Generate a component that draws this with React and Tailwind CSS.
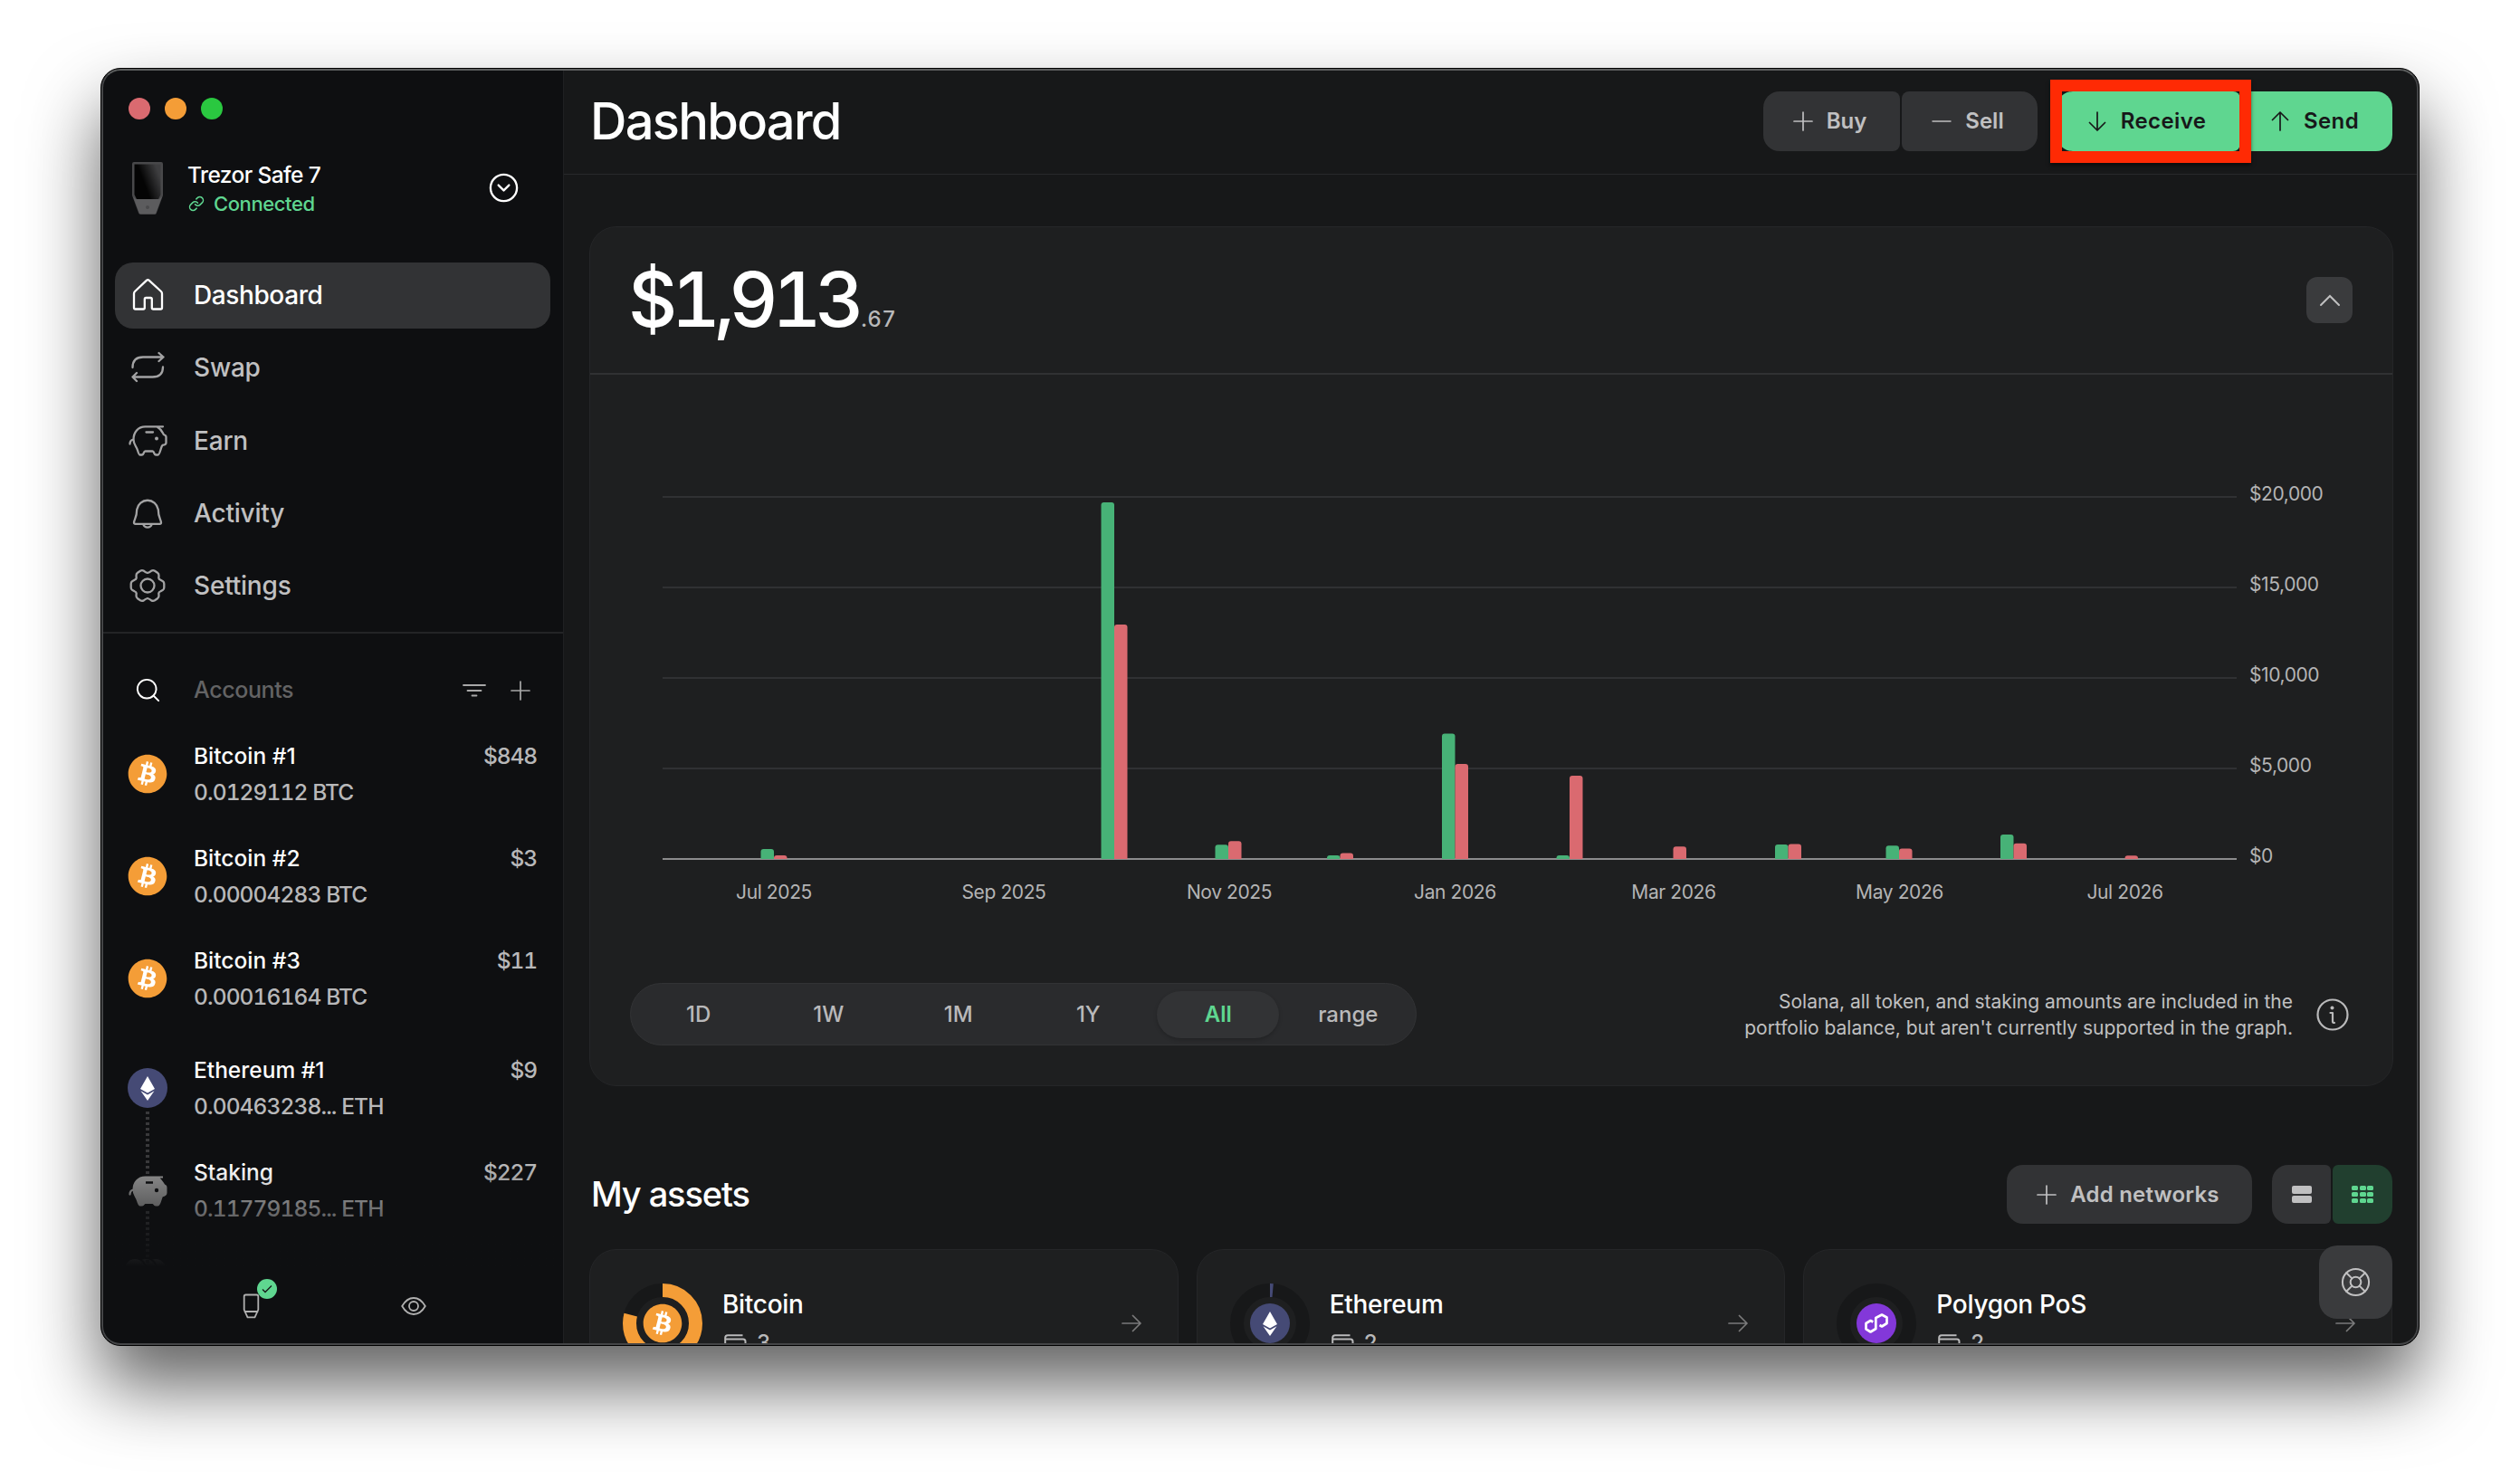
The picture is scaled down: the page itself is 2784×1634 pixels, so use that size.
import React, { useState } from 'react';
import { CircleChevronDown, LifeBuoy, Link, Search } from 'lucide-react';
import { FaBitcoin } from 'react-icons/fa';

const navItems = ['Dashboard', 'Swap', 'Earn', 'Activity', 'Settings'];

const accounts = [
    { name: 'Bitcoin #1', amount: '0.0129112 BTC', fiat: '$848', coin: 'btc' },
    { name: 'Bitcoin #2', amount: '0.00004283 BTC', fiat: '$3', coin: 'btc' },
    { name: 'Bitcoin #3', amount: '0.00016164 BTC', fiat: '$11', coin: 'btc' },
    { name: 'Ethereum #1', amount: '0.00463238... ETH', fiat: '$9', coin: 'eth' },
    { name: 'Staking', amount: '0.11779185... ETH', fiat: '$227', coin: 'staking' },
];

// x is the centre of the pair of bars, received / sent are in dollars
const bars = [
    { x: 203, received: 550, sent: 200 },
    { x: 579, received: 19700, sent: 12950 },
    { x: 705, received: 790, sent: 990 },
    { x: 828.5, received: 200, sent: 330 },
    { x: 955.5, received: 6920, sent: 5250 },
    { x: 1082, received: 200, sent: 4600 },
    { x: 1196.5, received: 0, sent: 690 },
    { x: 1323.5, received: 800, sent: 830 },
    { x: 1446, received: 740, sent: 570 },
    { x: 1572.5, received: 1350, sent: 860 },
    { x: 1695.5, received: 0, sent: 190 },
];

const months = [
    { x: 203, label: 'Jul 2025' },
    { x: 457, label: 'Sep 2025' },
    { x: 706, label: 'Nov 2025' },
    { x: 955.5, label: 'Jan 2026' },
    { x: 1197, label: 'Mar 2026' },
    { x: 1446.5, label: 'May 2026' },
    { x: 1695.5, label: 'Jul 2026' },
];

const gridLines = [
    { value: 20000, label: '$20,000' },
    { value: 15000, label: '$15,000' },
    { value: 10000, label: '$10,000' },
    { value: 5000, label: '$5,000' },
    { value: 0, label: '$0' },
];

const ranges = ['1D', '1W', '1M', '1Y', 'All', 'range'];

const NavIcon = ({ name }) => {
    const props = {
        fill: 'none',
        stroke: 'currentColor',
        strokeWidth: 2.3,
        strokeLinecap: 'round',
        strokeLinejoin: 'round',
    };

    if (name === 'Dashboard') {
        return (
            <svg width="35" height="37" viewBox="0 0 35 37" {...props}>
                <path d="M2 17.5Q2 16 3 15L15.8 2.8Q17.3 1.500 18.800 2.800L32 15Q33 16 33 17.500V33Q33 34.500 31.500 34.500H23.300Q21.800 34.500 21.800 33V23.500q0-1.500-1.500-1.500H15.300q-1.500 0-1.500 1.500V33Q13.800 34.500 12.300 34.500H3.500Q2 34.500 2 33Z" />
            </svg>
        );
    }
    if (name === 'Swap') {
        return (
            <svg width="38" height="36" viewBox="0 0 38 36" {...props}>
                <path d="M2.500 18C2.500 10 7 6.500 14 6.500H36.500M31.500 2 36.500 6.500 31.500 11M36 17.500C36 25 31.500 28.500 24.500 28.500H2.500M7 24 2.500 28.500 7 33" />
            </svg>
        );
    }
    if (name === 'Earn') {
        return (
            <svg width="43" height="37" viewBox="0 0 43 37" {...props}>
                <path d="M1.500 22.500C1.500 19.500 3 18 5.300 17.500M38 3.300H18.500C10.500 3.300 5.500 9.500 5.500 17.500C5.500 23 8.500 24.500 10 29.500C11 33 11.500 34.500 12.500 34.500H15C17 34.500 16.500 30.500 18.500 30.500H26.500C28.500 30.500 28 34.500 30 34.500H32.500C34.500 34.500 35 29 37 24.500Q37.500 23.500 39.500 23.300Q41.500 23 41.500 21V15Q41.500 13 39.500 12.500Q38.500 12 38 10.500C36.500 7.500 35 5.500 31.500 3.500M19.500 9.500H27" />
                <circle cx="31" cy="16.500" r="2" fill="currentColor" stroke="none" />
            </svg>
        );
    }
    if (name === 'Activity') {
        return (
            <svg width="34" height="38" viewBox="0 0 34 38" {...props}>
                <path d="M5.200 15A12 12.500 0 0 1 28.800 15C28.800 24 32 26 32 29.500Q32 30.800 30.500 30.800H3.500Q2 30.800 2 29.500C2 26 5.200 24 5.200 15ZM12.200 31A5 5 0 0 0 21.800 31" />
            </svg>
        );
    }
    return (
        <svg width="40" height="40" viewBox="-20 -20 40 40" {...props}>
            <path d="M0-14Q2-14.500 4-16.200Q6-17.500 8-16.300L11-14.300Q12.600-13.200 12.500-11L12.300-8.500Q12.500-7 14.500-6.200L17-4.800Q18.300-4 18.300-2V2Q18.300 4 17 4.800L14.500 6.200Q12.500 7 12.300 8.500L12.500 11Q12.600 13.200 11 14.300L8 16.300Q6 17.500 4 16.200Q2 14.500 0 14Q-2 14.500-4 16.200Q-6 17.500-8 16.300L-11 14.300Q-12.600 13.200-12.500 11L-12.300 8.500Q-12.500 7-14.500 6.200L-17 4.800Q-18.300 4-18.300 2V-2Q-18.300-4-17-4.800L-14.500-6.200Q-12.500-7-12.300-8.500L-12.500-11Q-12.600-13.200-11-14.300L-8-16.300Q-6-17.500-4-16.200Q-2-14.500 0-14Z" />
            <circle r="7.500" />
        </svg>
    );
};

const Plus = () => (
    <svg width="22" height="22" viewBox="0 0 22 22" stroke="currentColor" strokeWidth="1.700" strokeLinecap="round">
        <path d="M1 11H21M11 1V21" />
    </svg>
);

const Arrow = ({ className }) => (
    <svg
        width="22"
        height="22"
        viewBox="0 0 22 22"
        fill="none"
        stroke="currentColor"
        strokeWidth="1.700"
        strokeLinecap="round"
        strokeLinejoin="round"
        className={className}
    >
        <path d="M1 11H21M12.500 2.500 21 11 12.500 19.500" />
    </svg>
);

const Piggy = () => (
    <svg width="43" height="37" viewBox="0 0 43 37" className="text-[#929292]">
        <path
            d="M38 3.500H18.500C10.500 3.500 5.500 9.500 5.500 17.500C5.500 23 8.500 24.500 10 29.500C11 33 11.500 34.500 12.500 34.500H15C17 34.500 16.500 32 18.500 32H26.500C28.500 32 28 34.500 30 34.500H32.500C34.500 34.500 35 29 37 24.500Q41.500 23.500 41.500 21V15Q41.500 13 39.500 12.500C36.500 7.500 35 5.500 32 3.500"
            fill="currentColor"
            stroke="currentColor"
            strokeWidth="2"
            strokeLinejoin="round"
        />
        <path d="M1.500 22.500C1.500 19.500 3 18 5.300 17.500" fill="none" stroke="currentColor" strokeWidth="2.300" strokeLinecap="round" />
        <path d="M19 9.500H27" stroke="#0e0f11" strokeWidth="2.500" />
        <circle cx="31" cy="18" r="2.200" fill="#0e0f11" />
    </svg>
);

const CoinIcon = ({ coin }) => {
    if (coin === 'btc') {
        return (
            <div className="flex size-11 items-center justify-center rounded-full bg-[radial-gradient(circle,#ffffff_60%,transparent_61%)]">
                <FaBitcoin className="size-11 text-[#f49d37]" />
            </div>
        );
    }
    if (coin === 'eth') {
        return (
            <svg width="44" height="44" viewBox="0 0 44 44">
                <circle cx="22" cy="22" r="22" fill="#454a75" />
                <path d="M22 9 30 23 22 27.500 14 23ZM22 29.500 29.500 25.200 22 36 14.500 25.200Z" fill="#fff" />
            </svg>
        );
    }
    if (coin === 'matic') {
        return (
            <svg width="44" height="44" viewBox="0 0 44 44">
                <circle cx="22" cy="22" r="22" fill="#8338d9" />
                <path
                    d="M18.300 20.500 15.500 19 10.500 22V28.300L15.500 31.500 21.300 28V16L28 12.500 33.500 15.500V22L28 25.500 25.500 24"
                    fill="none"
                    stroke="#fff"
                    strokeWidth="2.700"
                    strokeLinejoin="round"
                    strokeLinecap="butt"
                />
            </svg>
        );
    }
    return <Piggy />;
};

const Donut = ({ share, color, coin }) => {
    const length = 2 * Math.PI * 36.5;
    return (
        <div className="grid size-[88px] shrink-0 place-items-center">
            <svg width="88" height="88" viewBox="0 0 88 88" className="col-start-1 row-start-1 -rotate-90">
                <circle cx="44" cy="44" r="36.500" fill="none" stroke="#171819" strokeWidth="15" />
                <circle
                    cx="44"
                    cy="44"
                    r="36.500"
                    fill="none"
                    stroke={color}
                    strokeWidth="15"
                    strokeDasharray={`${length * share} ${length}`}
                />
            </svg>
            <div className="col-start-1 row-start-1">
                <CoinIcon coin={coin} />
            </div>
        </div>
    );
};

const AssetCard = ({ name, count, share, color, coin }) => (
    <div className="flex h-[300px] flex-1 items-start rounded-t-[30px] border border-[#252628] bg-[#1e1f20] pl-[36px] pr-[40px] pt-[37px]">
        <Donut share={share} color={color} coin={coin} />
        <div className="ml-[22px] flex-1">
            <div className="mt-[5px] text-[28px] font-medium leading-[36px] tracking-[-0.3px] text-white">{name}</div>
            <div className="mt-[13px] flex items-start gap-[11px] pl-[2px] text-[#b9b9ba]">
                <svg width="25" height="24" viewBox="0 0 25 24" fill="none" stroke="currentColor" strokeWidth="2" className="mt-[2px]">
                    <path d="M20.500 1.200H4Q1.200 1.200 1.200 4V20Q1.200 22.500 4 22.500H21Q23.500 22.500 23.500 20V8Q23.500 5.500 21 5.500H1.500" />
                </svg>
                <span className="-mt-[3px] text-[24px] font-medium leading-[30px]">{count}</span>
            </div>
        </div>
        <Arrow className="mt-[33px] text-[#7a7a7b]" />
    </div>
);

const Sidebar = () => {
    const [active, setActive] = useState('Dashboard');

    return (
        <aside className="relative flex w-[511px] shrink-0 flex-col border-r border-[#1f2022] bg-[#0e0f11]">
            <div className="flex gap-4 pl-[30px] pt-8">
                <span className="size-6 rounded-full bg-[#da6a70]" />
                <span className="size-6 rounded-full bg-[#f49d37]" />
                <span className="size-6 rounded-full bg-[#2ac840]" />
            </div>

            {/* Device */}
            <div className="mt-[47px] flex h-[58px] items-center pl-[34px] pr-[48px]">
                <svg width="34" height="58" viewBox="0 0 34 58">
                    <path d="M2 0H32Q34 0 34 2V37L27 56Q26.500 58 25 58H9.500Q7.500 58 7 56L0 37V2Q0 0 2 0Z" fill="#48484a" />
                    <path d="M1 38 4 41H30L33 38 26 57H8Z" fill="#5c5c5e" />
                    <path d="M2.500 2.500H31.500V36L29 41H5L2.500 36Z" fill="url(#screen)" />
                    <circle cx="17" cy="50" r="2" fill="#4a4a4c" />
                    <defs>
                        <linearGradient id="screen" x1="0.100" y1="0.600" x2="0.900" y2="0.200">
                            <stop offset="0.300" stopColor="#040404" />
                            <stop offset="1" stopColor="#3e3e40" />
                        </linearGradient>
                    </defs>
                </svg>
                <div className="ml-[27px] flex-1 pt-[2px]">
                    <div className="text-[24.500px] font-medium leading-[32px] tracking-[-0.6px] text-white">Trezor Safe 7</div>
                    <div className="flex items-center gap-[10px] pl-[1px] text-[22px] font-medium leading-[32px] tracking-[-0.4px] text-[#5fd690]">
                        <Link size={18} strokeWidth={2} />
                        Connected
                    </div>
                </div>
                <CircleChevronDown size={35} strokeWidth={1.6} className="-mt-[2px] text-white" />
            </div>

            {/* Navigation */}
            <nav className="mt-[53px] flex flex-col gap-[7.300px] pl-[15px] pr-[14px]">
                {navItems.map((item) => (
                    <button
                        key={item}
                        onClick={() => setActive(item)}
                        className={
                            active === item
                                ? 'flex h-[73px] items-center rounded-[20px] bg-[#323335] pb-[2px] text-white'
                                : 'flex h-[73px] items-center rounded-[20px] pb-[1px] text-[#a3a3a4]'
                        }
                    >
                        <span className="ml-[11px] flex w-[50px] justify-center">
                            <NavIcon name={item} />
                        </span>
                        <span
                            className={
                                active === item
                                    ? 'ml-[26px] text-[28px] font-medium tracking-[-0.400px] text-white'
                                    : 'ml-[26px] text-[28px] font-medium tracking-[-0.200px] text-[#c0c0c1]'
                            }
                        >
                            {item}
                        </span>
                    </button>
                ))}
            </nav>

            {/* Accounts */}
            <div className="mt-[14px] flex h-[101px] shrink-0 items-center border-t-2 border-[#232426] pl-[36px] pr-[36px] pt-[26px]">
                <Search size={31} strokeWidth={1.5} className="text-white" />
                <span className="ml-[35px] flex-1 text-[25px] font-medium tracking-[-0.400px] text-[#636364]">Accounts</span>
                <svg width="28" height="16" viewBox="0 0 28 16" stroke="#a8a8a8" strokeWidth="1.800" strokeLinecap="round" className="mr-[26px]">
                    <path d="M2 2H26M6.500 8H21.500M11.500 13.500H16.500" />
                </svg>
                <span className="text-[#a8a8a8]">
                    <Plus />
                </span>
            </div>
            <div className="flex flex-col">
                {accounts.map((account) => (
                    <div
                        key={account.name}
                        className={
                            account.coin === 'eth'
                                ? 'mt-[8px] flex h-[113px] shrink-0 items-center pb-[1px] pl-[28px] pr-[29px]'
                                : 'flex h-[113px] shrink-0 items-center pb-[1px] pl-[28px] pr-[29px]'
                        }
                    >
                        <div className="relative flex w-[46px] shrink-0 justify-center">
                            <CoinIcon coin={account.coin} />
                            {account.coin !== 'btc' && (
                                <div className="absolute left-[21px] top-full mt-[4px] h-[70px] w-[4px] bg-[repeating-linear-gradient(to_bottom,#39393b_0,#39393b_3px,transparent_3px,transparent_6px)]" />
                            )}
                        </div>
                        <div className="ml-[28px] flex-1 text-[24.500px] font-medium leading-[40px]">
                            <div className="flex justify-between text-white">
                                {account.name}
                                <span className="tracking-[-1.100px] text-[#b8b8b9] tabular-nums">{account.fiat}</span>
                            </div>
                            <div className="tracking-[-0.900px] text-[#b8b8b9] tabular-nums">{account.amount}</div>
                        </div>
                    </div>
                ))}
                {/* Token group, nearly hidden by the fade */}
                <svg width="50" height="26" viewBox="0 0 50 26" fill="#8a8a8a" stroke="#0e0f11" strokeWidth="2" className="ml-[24px] mt-[17px] shrink-0">
                    <circle cx="36" cy="13" r="12" />
                    <circle cx="25" cy="13" r="12" />
                    <circle cx="13" cy="13" r="12" />
                </svg>
            </div>

            {/* Bottom bar over the fading list */}
            <div className="absolute inset-x-0 bottom-0">
                <div className="h-[110px] bg-linear-to-b from-[#0e0f11]/0 to-[#0e0f11]" />
                <div className="flex h-[87px] bg-[#0e0f11]">
                    <div className="relative ml-[156px] mt-[30px] text-[#b0b0b0]">
                        <svg width="19" height="28" viewBox="0 0 19 28" fill="none" stroke="currentColor" strokeWidth="1.800" strokeLinejoin="round">
                            <path d="M3.500 1.500H15.500Q17.300 1.500 17.300 3.300V18L13.500 26.300H5.500L1.700 18V3.300Q1.700 1.500 3.500 1.500ZM1.700 20H17.300" />
                        </svg>
                        <span className="absolute -top-[16px] left-[16px] flex size-[22px] items-center justify-center rounded-full bg-[#5fd690]">
                            <svg width="12" height="10" viewBox="0 0 12 10" fill="none" stroke="#171819" strokeWidth="1.300">
                                <path d="M1 5.500 4 8.500 11 1.500" />
                            </svg>
                        </span>
                    </div>
                    <svg width="28" height="20" viewBox="0 0 28 20" fill="none" stroke="#b0b0b0" strokeWidth="1.800" className="ml-[156px] mt-[34px]">
                        <path d="M1.200 10C5 3.500 9 1 14 1S23 3.500 26.800 10C23 16.500 19 19 14 19S5 16.500 1.200 10Z" />
                        <circle cx="14" cy="10" r="5" />
                    </svg>
                </div>
            </div>
        </aside>
    );
};

const Chart = () => (
    <svg width="1991" height="646" viewBox="0 0 1991 646" className="font-[Inter,sans-serif] tracking-[-0.400px]">
        {gridLines.map((line) => (
            <g key={line.value}>
                <path d={`M80 ${535 - line.value / 50}H1819`} stroke={line.value === 0 ? '#8c8c8d' : '#303133'} strokeWidth="2" />
                <text x="1833" y={539 - line.value / 50} fontSize="21" fill="#b4b4b5">
                    {line.label}
                </text>
            </g>
        ))}
        {bars.map((bar) => (
            <g key={bar.x}>
                {bar.received > 0 && (
                    <path
                        d={`M${bar.x - 14.5} 535V${538 - bar.received / 50}q0-3 3-3h8.500q3 0 3 3V535Z`}
                        fill="#47b277"
                    />
                )}
                <path d={`M${bar.x} 535V${538 - bar.sent / 50}q0-3 3-3h8.500q3 0 3 3V535Z`} fill="#da6a70" />
            </g>
        ))}
        {months.map((month) => (
            <text key={month.label} x={month.x} y="579" fontSize="21" fill="#b4b4b5" textAnchor="middle">
                {month.label}
            </text>
        ))}
    </svg>
);

const App = () => {
    const [range, setRange] = useState('All');

    return (
        <div className="h-[1634px] w-[2784px] overflow-hidden bg-white pl-[111px] pt-[75px] font-[Inter,sans-serif]">
            <div className="relative flex h-[1412px] w-[2562px] overflow-hidden rounded-[22px] border border-black bg-[#171819] shadow-[0_44px_80px_rgba(0,0,0,0.62)]">
                <Sidebar />

                <main className="flex min-w-0 flex-1 flex-col">
                    <header className="flex h-[117px] shrink-0 items-center border-b border-[#28292b] pl-[29px] pr-[29px]">
                        <h1 className="flex-1 text-[56px] font-medium leading-none tracking-[-1.7px] text-white">Dashboard</h1>
                        <div className="flex gap-[2px] text-[24px] font-semibold">
                            <button className="flex h-[66px] w-[151px] items-center justify-center gap-[15px] rounded-l-[18px] rounded-r-[8px] bg-[#323335] pr-[4px] text-[#c0c0c1]">
                                <Plus />
                                Buy
                            </button>
                            <button className="flex h-[66px] w-[150px] items-center justify-center gap-[15px] rounded-l-[8px] rounded-r-[18px] bg-[#323335] pr-[4px] text-[#c0c0c1]">
                                <svg width="22" height="22" viewBox="0 0 22 22" stroke="currentColor" strokeWidth="1.700">
                                    <path d="M0.500 11H21.500" />
                                </svg>
                                Sell
                            </button>
                            <button className="relative ml-[19px] flex h-[66px] w-[203px] items-center justify-center gap-[15px] rounded-l-[18px] rounded-r-[8px] bg-[#5fd690] pr-[4px] tracking-[0.400px] text-[#171819]">
                                <Arrow className="rotate-90" />
                                Receive
                                <span className="absolute -left-[7px] -top-[13px] z-10 h-[92px] w-[222px] border-[13px] border-[#ff2a04] shadow-[0_3px_4px_rgba(0,0,0,0.5)]" />
                            </button>
                            <button className="flex h-[66px] w-[166px] items-center justify-center gap-[15px] rounded-l-[8px] rounded-r-[18px] bg-[#5fd690] pr-[6px] tracking-[0.400px] text-[#171819]">
                                <Arrow className="-rotate-90" />
                                Send
                            </button>
                        </div>
                    </header>

                    {/* Portfolio graph */}
                    <section className="ml-[28px] mr-[28px] mt-[57px] flex h-[950px] shrink-0 flex-col rounded-[30px] border border-[#252628] bg-[#1e1f20]">
                        <div className="flex h-[163px] shrink-0 items-center justify-between border-b-2 border-[#303133] pl-[42px] pr-[44px]">
                            <div className="flex items-baseline pb-[2px] tabular-nums">
                                <span className="text-[84px] font-[550] leading-none tracking-[-6.700px] text-white">$1,913</span>
                                <span className="ml-[3px] text-[24px] font-medium tracking-[0.400px] text-[#b9b9ba]">.67</span>
                            </div>
                            <button className="flex size-[51px] items-center justify-center rounded-[12px] bg-[#3a3b3d]">
                                <svg width="24" height="14" viewBox="0 0 24 14" fill="none" stroke="#c0c0c1" strokeWidth="2" strokeLinecap="round">
                                    <path d="M2 12 12 2 22 12" />
                                </svg>
                            </button>
                        </div>
                        <Chart />
                        <div className="mt-[26px] flex items-center pl-[44px] pr-[48px]">
                            <div className="flex h-[69px] w-[869px] items-center rounded-full border border-[#323335] bg-[#2a2b2d] px-[3px]">
                                {ranges.map((item) => (
                                    <div key={item} className="flex flex-1 justify-center">
                                        <button
                                            onClick={() => setRange(item)}
                                            className={
                                                range === item
                                                    ? 'h-[52px] w-[135px] rounded-full bg-[#323335] pt-[1px] text-[24px] font-semibold text-[#5fd690] shadow-[0_2px_4px_rgba(0,0,0,0.2)]'
                                                    : 'h-[52px] w-[135px] rounded-full pt-[1px] text-[24px] font-medium text-[#b9b9ba]'
                                            }
                                        >
                                            {item}
                                        </button>
                                    </div>
                                ))}
                            </div>
                            <p className="flex-1 text-right text-[21px] leading-[29px] tracking-[-0.020px] text-[#c0c0c1]">
                                Solana, all token, and staking amounts are included in the
                                <br />
                                portfolio balance, but aren't currently supported in the graph.
                            </p>
                            <svg width="36" height="36" viewBox="0 0 36 36" fill="none" stroke="#b9b9ba" strokeWidth="2.200" className="ml-[26px]">
                                <circle cx="18" cy="18" r="16.500" />
                                <path d="M15.500 16H18V25.500Q18 27 20 27" strokeLinecap="round" strokeLinejoin="round" />
                                <circle cx="17.500" cy="10.500" r="2" fill="#b9b9ba" stroke="none" />
                            </svg>
                        </div>
                    </section>

                    {/* Assets */}
                    <section className="mt-[87px] pl-[28px] pr-[29px]">
                        <div className="flex items-center">
                            <h2 className="flex-1 pb-[2px] pl-[2px] text-[38px] font-medium leading-none tracking-[-1.1px] text-white">My assets</h2>
                            <button className="flex h-[65px] w-[271px] items-center justify-center gap-[15px] rounded-[18px] bg-[#323335] pr-[3px] text-[24px] font-semibold tracking-[0.200px] text-[#c0c0c1]">
                                <Plus />
                                Add networks
                            </button>
                            <div className="ml-[22px] flex gap-[2px]">
                                <button className="flex h-[65px] w-[65px] items-center justify-center rounded-l-[18px] rounded-r-[6px] bg-[#323335]">
                                    <span className="flex w-[22px] flex-col gap-[2px]">
                                        <span className="h-[8.500px] rounded-[2px] bg-[#c0c0c1]" />
                                        <span className="h-[8.500px] rounded-[2px] bg-[#c0c0c1]" />
                                    </span>
                                </button>
                                <button className="flex h-[65px] w-[66px] items-center justify-center rounded-l-[6px] rounded-r-[18px] bg-[#213f2f]">
                                    <span className="grid grid-cols-3 gap-x-[1.500px] gap-y-[1.500px]">
                                        {Array.from({ length: 9 }).map((_, i) => (
                                            <span key={i} className="h-[5.500px] w-[7px] rounded-[1.500px] bg-[#5fd690]" />
                                        ))}
                                    </span>
                                </button>
                            </div>
                        </div>
                        <div className="mt-[28px] flex gap-[20px]">
                            <AssetCard name="Bitcoin" count="3" share={0.79} color="#f49d37" coin="btc" />
                            <AssetCard name="Ethereum" count="2" share={0.014} color="#454a75" coin="eth" />
                            <AssetCard name="Polygon PoS" count="2" share={0} color="#8338d9" coin="matic" />
                        </div>
                    </section>
                </main>

                {/* Help */}
                <button className="absolute bottom-[29px] right-[29px] flex size-[81px] items-center justify-center rounded-[20px] bg-[#3a3b3d]">
                    <LifeBuoy size={35} strokeWidth={1.4} className="text-[#c0c0c1]" />
                </button>

                {/* Window edge highlight */}
                <div className="pointer-events-none absolute inset-0 rounded-[21px] border-2 border-[#444547] border-t-[#5c5e5e]" />
            </div>
        </div>
    );
};

export default App;
